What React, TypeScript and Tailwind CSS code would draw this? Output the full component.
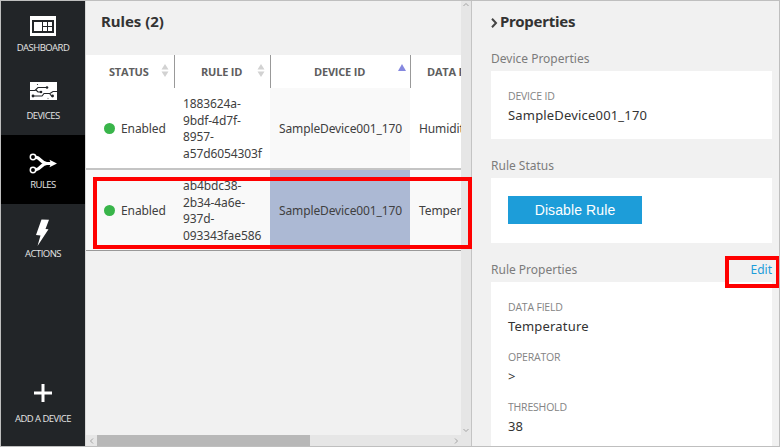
import React from "react";

function DashboardIcon() {
  return (
    <svg width="26" height="20" viewBox="0 0 26 20" shapeRendering="crispEdges">
      <rect width="26" height="20" fill="#fff" />
      <rect x="2" y="4" width="22" height="13" fill="#222528" />
      <rect x="4" y="6" width="8" height="9" fill="#fff" />
      <path d="M13 6h4v4h-4zM18 6h4v4h-4zM13 11h4v4h-4zM18 11h4v4h-4z" fill="#fff" />
    </svg>
  );
}

function DevicesIcon() {
  return (
    <svg width="27" height="18" viewBox="0 0 27 18">
      <rect width="27" height="18" fill="#fff" />
      <path
        d="M0 8.500h5l3-3h9M6 8l2 2h3M3 14h9l2-2.500h6l3-2h4M19.500 11.500l2 2.500h2"
        fill="none"
        stroke="#222528"
        strokeWidth="1.1"
      />
      <g fill="#222528">
        <circle cx="17" cy="5.5" r="1.3" />
        <circle cx="11" cy="10" r="1.3" />
        <circle cx="3" cy="14" r="1.4" />
        <circle cx="22.5" cy="14" r="1.4" />
        <circle cx="7.5" cy="2.5" r="0.6" />
        <circle cx="18" cy="16.5" r="0.7" fill="#888" />
      </g>
    </svg>
  );
}

function RulesIcon() {
  return (
    <svg width="28" height="22" viewBox="0 0 28 22" fill="none" stroke="#fff">
      <circle cx="4" cy="4" r="2.7" strokeWidth="1.5" />
      <circle cx="4" cy="17" r="2.7" strokeWidth="1.5" />
      <path d="M6.500 4.200C12 4.500 12 10.500 18 10.500h4M6.500 16.800C12 16.500 12 10.500 18 10.500" strokeWidth="3.2" />
      <path d="M20.500 6.800 28 10.500l-7.500 3.700 1.400-3.700z" fill="#fff" stroke="none" />
    </svg>
  );
}

function ActionsIcon() {
  return (
    <svg width="16" height="27" viewBox="0 0 16 27">
      <path d="M6.500 0.500 14 0.800 10.500 10l3 .3L2.500 27l3-10.500L1 16z" fill="#fff" />
    </svg>
  );
}

function PlusIcon() {
  return (
    <svg width="18" height="18" viewBox="0 0 18 18">
      <path d="M9 0v18M0 9h18" stroke="#fff" strokeWidth="3" />
    </svg>
  );
}

function SortIcon() {
  return (
    <svg width="8" height="13" viewBox="0 0 8 13" className="mb-[2px] shrink-0">
      <path d="M4 0 7.500 5.500h-7zM4 13 .5 7.500h7z" fill="#d2d2d2" />
    </svg>
  );
}

function Chevron({ d, className = "" }: { d: string; className?: string }) {
  return (
    <svg width="6" height="6" viewBox="0 0 6 6" fill="none" stroke="#a3a3a3" className={className}>
      <path d={d} />
    </svg>
  );
}

function NavItem({ label, className, children }: { label: string; className: string; children: React.ReactNode }) {
  return (
    <div className={`flex flex-col items-center ${className}`}>
      <div className="flex h-7 items-center justify-center">{children}</div>
      <span className="whitespace-nowrap font-['Open_Sans',sans-serif] text-[9.500px] leading-3 tracking-[-0.55px] text-[#e4e4e4]">{label}</span>
    </div>
  );
}

type Rule = { id: string[]; device: string; field: string; selected: boolean };

const rules: Rule[] = [
  { id: ["1883624a-", "9bdf-4d7f-", "8957-", "a57d6054303f"], device: "SampleDevice001_170", field: "Humidity", selected: false },
  { id: ["ab4bdc38-", "2b34-4a6e-", "937d-", "093343fae586"], device: "SampleDevice001_170", field: "Temperature", selected: true },
];

function RuleRow({ rule }: { rule: Rule }) {
  return (
    <div className={`grid shrink-0 grid-cols-[88px_96px_140px_51px] text-[12px] tracking-[-0.1px] text-[#404040] ${rule.selected ? "h-[81px] border-b border-[#999] bg-[#f9f9f9]" : "h-[82px] border-b-2 border-[#c4c4c4] bg-white"}`}>
      <div className="flex items-center pl-[18px]">
        <span className="mr-[6px] size-[11px] rounded-full bg-[#39b54a]" />
        <span className="pt-px">Enabled</span>
      </div>
      <div className={`flex flex-col justify-center pl-[9px] leading-[16.500px] ${rule.selected ? "pt-[2px]" : "pt-[2px]"}`}>
        {rule.id.map((part) => (
          <span key={part}>{part}</span>
        ))}
      </div>
      <div className={`flex items-center pl-[9px] pt-[2px] tracking-[-0.12px] ${rule.selected ? "bg-[#acb9d4]" : "bg-[#f9f9f9]"}`}>{rule.device}</div>
      <div className="flex items-center overflow-hidden pl-[9px] pt-[2px]">{rule.field}</div>
    </div>
  );
}

function Field({ label, value }: { label: string; value: string }) {
  return (
    <div className="h-[50px]">
      <div className="font-['Open_Sans',sans-serif] text-[10.500px] leading-[14px] tracking-[-0.2px] text-[#848484]">{label}</div>
      <div className="mt-[2px] text-[13px] leading-[20px] tracking-[0.18px] text-[#333]">{value}</div>
    </div>
  );
}

export default function App() {
  return (
    <div className="relative flex h-[447px] w-[780px] overflow-hidden border border-[#bfbfbf] bg-[#f1f1f1] font-['Noto_Sans',sans-serif]">
      <nav className="flex w-[84px] shrink-0 flex-col bg-[#222528]">
        <NavItem label="DASHBOARD" className="h-[66px] gap-[2px] pt-[11px]"><DashboardIcon /></NavItem>
        <NavItem label="DEVICES" className="h-[68px] gap-[5px] pt-[10px]"><DevicesIcon /></NavItem>
        <NavItem label="RULES" className="h-[69px] gap-px bg-black pt-[15px]"><RulesIcon /></NavItem>
        <NavItem label="ACTIONS" className="h-[69px] gap-[2px] pt-[14px]"><ActionsIcon /></NavItem>
        <NavItem label="ADD A DEVICE" className="mt-auto h-[67px] gap-[6px]"><PlusIcon /></NavItem>
      </nav>

      <main className="flex w-[386px] shrink-0">
        <div className="flex w-[376px] flex-col overflow-hidden border-l border-[#d8d8d8]">
          <h1 className="h-[54px] shrink-0 pl-[15px] pt-[10px] text-[15px] font-bold leading-5 tracking-[-0.05px] text-[#333]">Rules (2)</h1>
          <div className="grid h-[33px] shrink-0 grid-cols-[89px_96px_140px_50px] bg-white font-['Open_Sans',sans-serif] text-[11px] font-bold tracking-[-0.2px] text-[#5e5e5e]">
            <div className="flex items-center justify-between border-r border-[#999] pl-[23px] pr-[5px]"><span className="pt-[2px]">STATUS</span><SortIcon /></div>
            <div className="flex items-center justify-between border-r border-[#999] pl-[26px] pr-[5px]"><span className="pt-[2px]">RULE ID</span><SortIcon /></div>
            <div className="flex items-center justify-between border-r border-[#999] pl-[43px] pr-1">
              <span className="pt-[2px]">DEVICE ID</span>
              <svg width="8" height="7" viewBox="0 0 8 7" className="mb-[9px]"><path d="M4 0 8 7H0z" fill="#8588df" /></svg>
            </div>
            <div className="flex items-center overflow-hidden whitespace-nowrap pl-4 pt-[2px]">DATA FIELD</div>
          </div>
          {rules.map((rule) => <RuleRow key={rule.id[0]} rule={rule} />)}
          <div className="mt-auto flex h-[11px] shrink-0 items-center bg-[#e6e6e6]">
            <Chevron d="M4 .5 1.500 3 4 5.500" className="ml-[3px] mr-[2px]" />
            <div className="h-full w-[213px] bg-[#b8b8b8]" />
            <Chevron d="M2 .5 4.500 3 2 5.500" className="ml-auto mr-[2px]" />
          </div>
        </div>
        <div className="flex w-[10px] flex-col items-center justify-between bg-[#e6e6e6] pb-[13px] pt-px">
          <Chevron d="M.5 4 3 1.500 5.500 4" />
          <Chevron d="M.5 2 3 4.500 5.500 2" />
        </div>
      </main>

      <aside className="flex grow flex-col border-l border-[#c4c4c4] pl-[19px] pr-[7px]">
        <h2 className="flex h-[49px] shrink-0 items-start pt-[10px] text-[15px] font-bold leading-5 tracking-[-0.25px] text-[#333]">
          <svg width="7" height="10" viewBox="0 0 7 10" className="mr-[2px] mt-[7px]"><path d="m1 .8 4 4.200-4 4.200" fill="none" stroke="#444" strokeWidth="2" /></svg>
          Properties
        </h2>
        <div className="h-[21px] shrink-0 text-[12px] leading-[17px] text-[#7c7c7c]">Device Properties</div>
        <section className="h-[68px] shrink-0 bg-white pl-[17px] pt-[18px]">
          <Field label="DEVICE ID" value="SampleDevice001_170" />
        </section>
        <div className="mt-[18px] h-[21px] shrink-0 text-[12px] leading-[17px] text-[#7c7c7c]">Rule Status</div>
        <section className="h-[65px] shrink-0 bg-white pl-[17px] pt-[18px]">
          <button className="h-[28px] w-[134px] bg-[#1d9dd9] font-['Liberation_Sans',sans-serif] text-[14px] tracking-[0.1px] text-white">Disable Rule</button>
        </section>
        <div className="mt-[18px] flex h-[21px] shrink-0 justify-between text-[12px] leading-[17px] text-[#7c7c7c]">
          <span>Rule Properties</span>
          <span className="text-[#1d9dd9]">Edit</span>
        </div>
        <section className="grow bg-white pl-[17px] pt-[18px]">
          <Field label="DATA FIELD" value="Temperature" />
          <Field label="OPERATOR" value=">" />
          <Field label="THRESHOLD" value="38" />
        </section>
      </aside>

      <div className="absolute left-[92px] top-[176px] h-[72px] w-[379px] border-4 border-[#ff0000]" />
      <div className="absolute left-[724px] top-[255px] h-[32px] w-[55px] border-4 border-[#ff0000]" />
    </div>
  );
}
